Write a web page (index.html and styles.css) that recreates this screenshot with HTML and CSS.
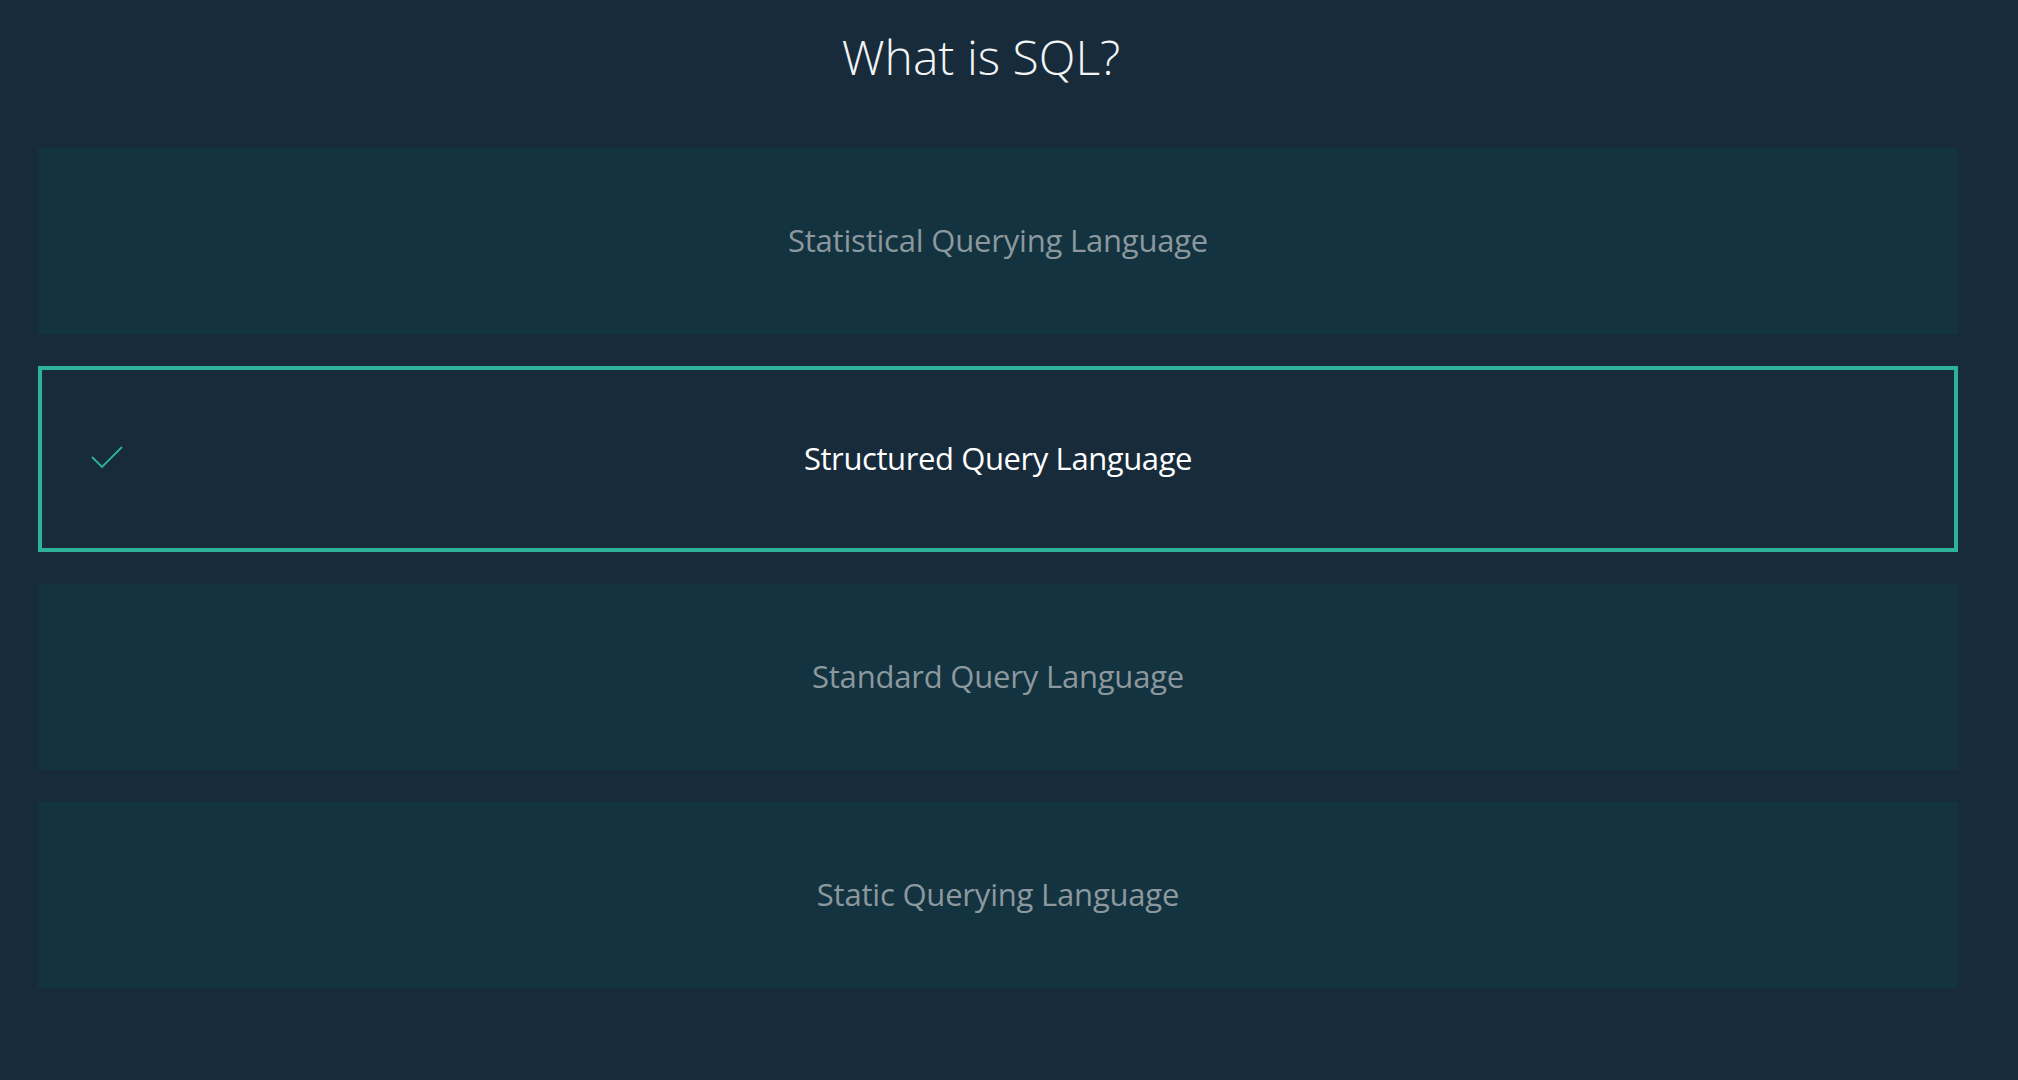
FILE: index.html
```html
<!DOCTYPE html>
<html>
<head>
<meta charset="utf-8">
<link rel="stylesheet" href="styles.css">
</head>
<body>
<main class="quiz">
  <h1 class="question">What is SQL?</h1>
  <ul class="options">
    <li class="option"><span class="label">Statistical Querying Language</span></li>
    <li class="option selected">
      <svg class="check" width="34" height="24" viewBox="0 0 34 24"><polyline points="2,12 12,22 32,2" fill="none" stroke="#2db39a" stroke-width="1.8"/></svg>
      <span class="label">Structured Query Language</span>
    </li>
    <li class="option"><span class="label">Standard Query Language</span></li>
    <li class="option"><span class="label">Static Querying Language</span></li>
  </ul>
</main>
</body>
</html>
```

FILE: styles.css
```css
html, body {
  margin: 0;
  padding: 0;
  background: #172b3a;
  height: 100%;
}
body {
  font-family: "Open Sans", "Noto Sans", sans-serif;
}
.quiz {
  width: 1920px;
  margin-left: 38px;
}
.question {
  margin: 0;
  padding: 23px 34px 0 0;
  height: 126px;
  box-sizing: border-box;
  text-align: center;
  font-weight: 300;
  font-size: 48px;
  line-height: 68px;
  color: #f2f4f5;
}
.options {
  list-style: none;
  margin: 0;
  padding: 0;
  display: flex;
  flex-direction: column;
  gap: 32px;
  margin-top: 22px;
}
.option {
  position: relative;
  height: 186px;
  box-sizing: border-box;
  padding-bottom: 3px;
  background: #12333f;
  display: flex;
  align-items: center;
  justify-content: center;
}
.label {
  font-size: 31px;
  font-weight: 400;
  color: #8d989e;
  letter-spacing: -0.2px;
}
.option.selected {
  background: #172b3a;
  border: 4px solid #2db39a;
}
.option.selected .label {
  color: #ffffff;
  letter-spacing: -0.4px;
}
.check {
  position: absolute;
  left: 48px;
  top: 75px;
}
```
